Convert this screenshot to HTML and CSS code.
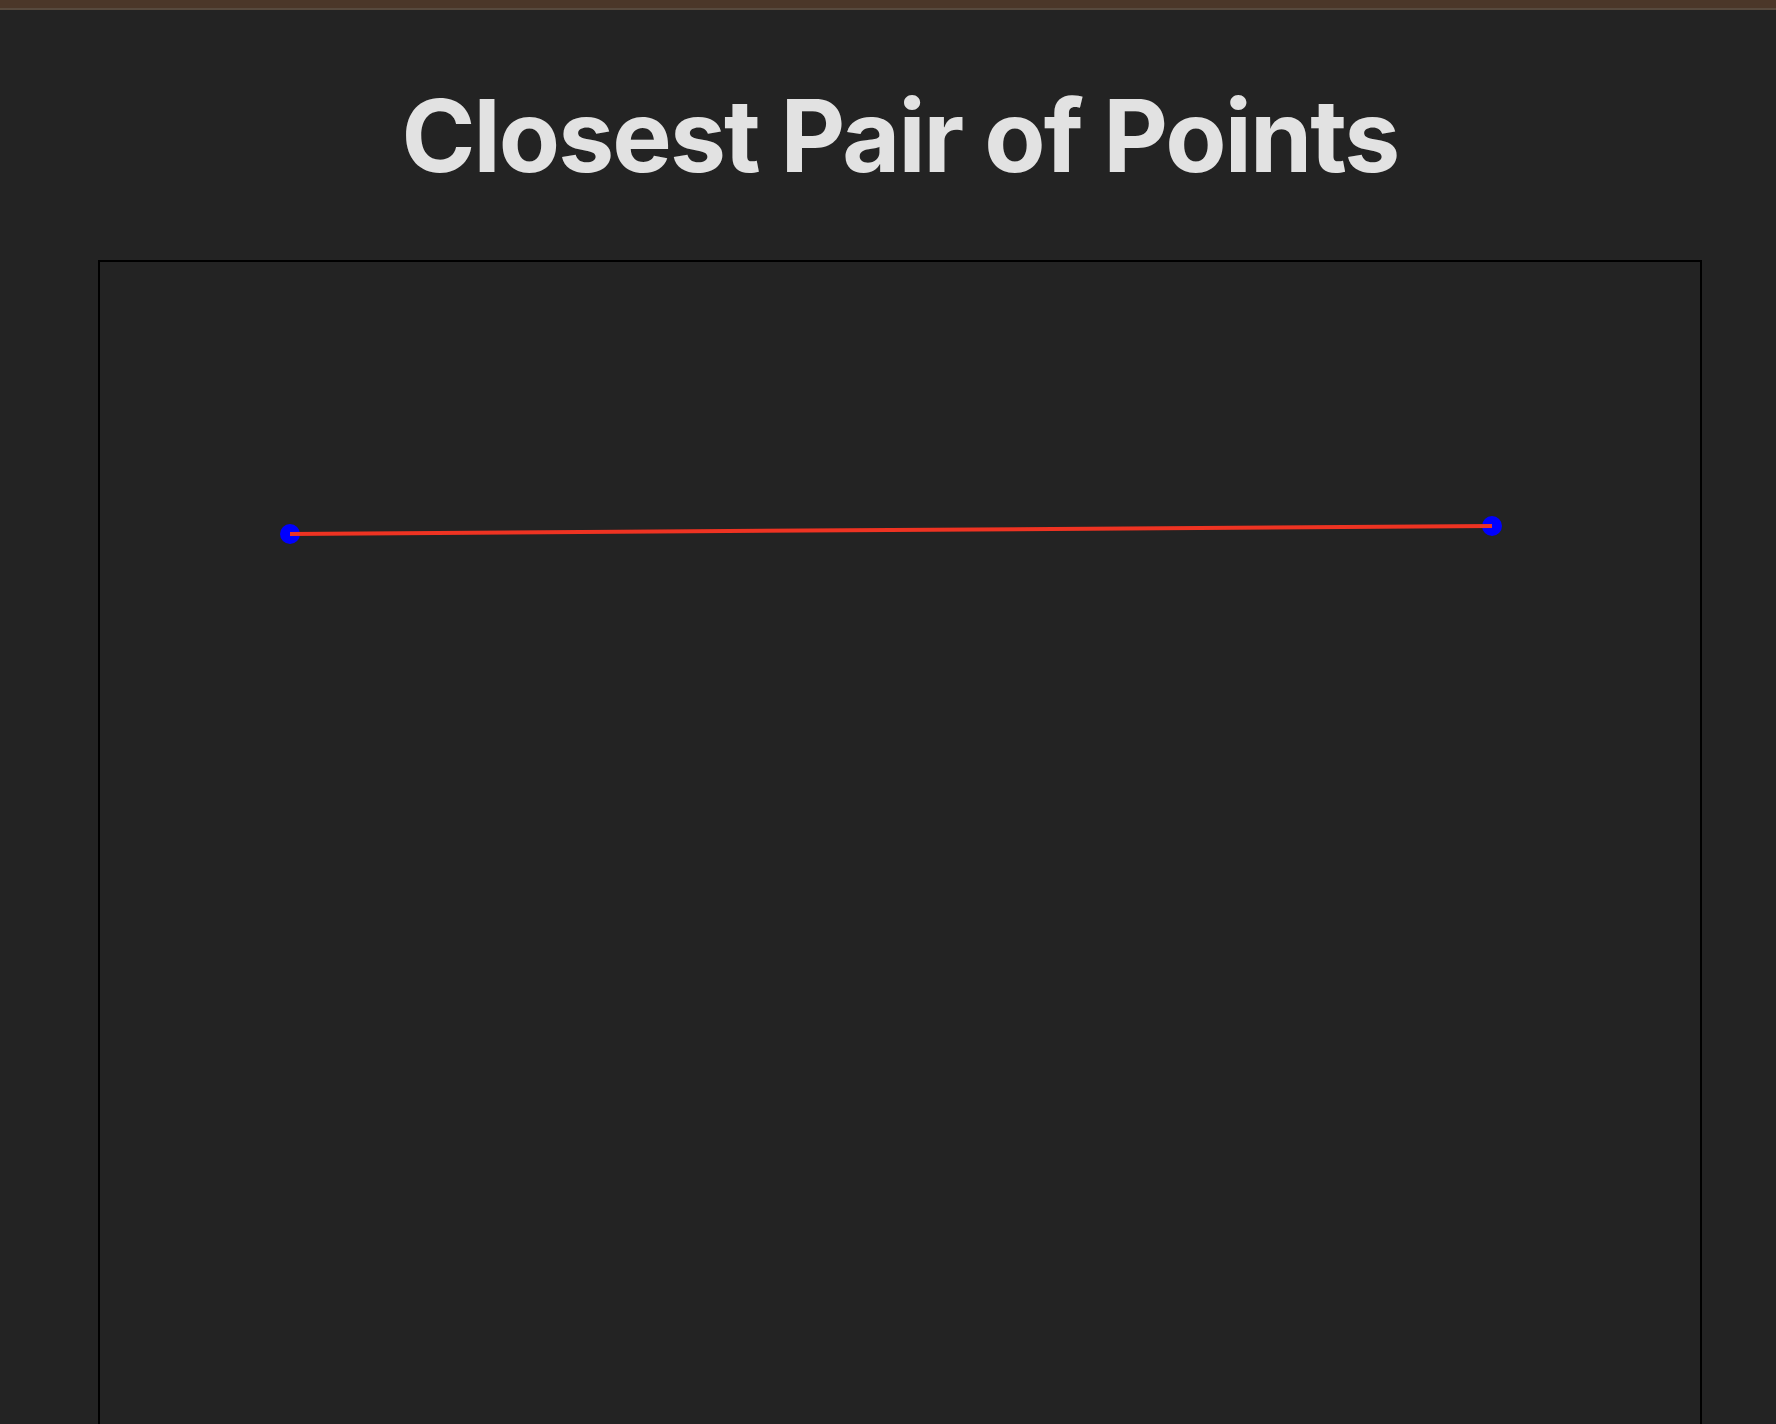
FILE: index.html
```html
<!DOCTYPE html>
<html lang="en">
<head>
<meta charset="utf-8">
<title>Closest Pair of Points</title>
<link rel="stylesheet" href="styles.css">
</head>
<body>
<div class="topbar"></div>
<main class="page">
  <h1 class="title">Closest Pair of Points</h1>
  <div class="board">
    <svg class="plot" width="1600" height="1200" viewBox="0 0 1600 1200" xmlns="http://www.w3.org/2000/svg">
      <circle cx="190" cy="272" r="10" fill="#0000ff"/>
      <circle cx="1392" cy="264" r="10" fill="#0000ff"/>
      <line x1="190" y1="272" x2="1392" y2="264" stroke="#ee3322" stroke-width="4"/>
    </svg>
  </div>
</main>
</body>
</html>
```
FILE: styles.css
```css
html, body {
  margin: 0;
  padding: 0;
  background: #232323;
}
body {
  font-family: Inter, "Noto Sans", sans-serif;
  color: #e2e2e2;
  overflow: hidden;
}
.topbar {
  height: 8px;
  background: #4b3729;
  border-bottom: 2px solid #574a3e;
}
.page {
  display: flex;
  flex-direction: column;
  align-items: center;
  padding-left: 24px;
}
.title {
  margin: 66px 0 0 0;
  text-align: center;
  font-size: 100px;
  font-weight: 700;
  line-height: 120px;
  letter-spacing: -1.9px;
}
.board {
  margin-top: 64px;
  width: 1600px;
  border: 2px solid #000;
}
.plot {
  display: block;
}
```
